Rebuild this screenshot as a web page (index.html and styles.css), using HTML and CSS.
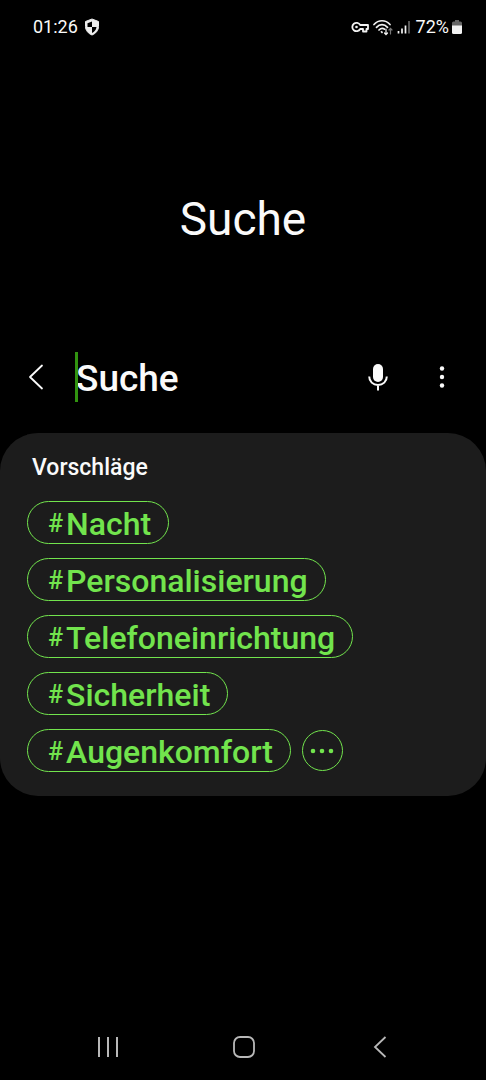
FILE: index.html
```html
<!DOCTYPE html>
<html lang="de">
<head>
<meta charset="utf-8">
<meta name="viewport" content="width=device-width, initial-scale=1">
<title>Suche</title>
<link rel="stylesheet" href="styles.css">
</head>
<body>
<div class="screen">
  <header class="status">
    <div class="status-group">
      <span>01:26</span>
      <svg class="shield" width="16" height="18" viewBox="0 0 16 18" aria-hidden="true">
        <path d="M8 1 14.500 3.500V8.500C14.500 12.500 11.500 15.700 8 17 4.500 15.700 1.500 12.500 1.500 8.500V3.500Z" fill="#eee" stroke="#eee"/>
        <path d="M8 3.500V9H3.500V5.200ZM8 9H12.500C12.200 11.800 10.500 13.800 8 15Z" fill="#000"/>
      </svg>
    </div>
    <div class="status-group">
      <svg width="18" height="12" viewBox="0 0 18 12" fill="none" stroke="#f2f2f2" stroke-width="1.800" aria-hidden="true">
        <path d="M9.200 4H17V8H15.500V10.500H12V8H9.200A4.200 4.200 0 1 1 9.200 4Z" stroke-linejoin="round"/>
        <circle cx="5.500" cy="6" r="1.300" fill="#f2f2f2" stroke="none"/>
      </svg>
      <svg class="wifi" width="20" height="17" viewBox="0 0 20 17" fill="none" stroke="#f2f2f2" stroke-width="1.700" stroke-linecap="round" aria-hidden="true">
        <path d="M1 5.500C5.500 .500 12.500 .500 17 5.500M3.500 8.300C6.800 4.800 11.200 4.800 14.500 8.300M6 11C8 9 10 9 11.500 10.200"/>
        <path d="M7.300 12.800 9 11.700 10 13.500 9 14.500Z" fill="#f2f2f2" stroke="none"/>
        <path d="M13 10V15.500M11.500 14 13 15.700 14.500 14" stroke-width="1.200"/>
        <path d="M17.500 15V9.500M16 11 17.500 9.300 19 11" stroke="#777" stroke-width="1.200"/>
      </svg>
      <svg class="signal" width="14" height="14" viewBox="0 0 14 14" stroke-width="1.700" stroke="#f2f2f2" aria-hidden="true">
        <path d="M1.500 11V13.500M5 8.500V13.500M8.500 5.500V13.500"/><path d="M12 1V13.500" stroke="#666"/>
      </svg>
      <span>72%</span>
      <svg class="battery" width="10" height="14" viewBox="0 0 10 14" aria-hidden="true">
        <path d="M3 0H7V1.500H8.500Q10 1.500 10 3V6H0V3Q0 1.500 1.500 1.500H3Z" fill="#666"/>
        <path d="M0 5.500H10V12.500Q10 14 8.500 14H1.500Q0 14 0 12.500Z" fill="#f2f2f2"/>
      </svg>
    </div>
  </header>

  <main>
    <h1 class="title">Suche</h1>

    <form class="search" role="search">
      <button class="icon-button" type="button" aria-label="Zurück">
        <svg width="16" height="26" viewBox="0 0 16 26" fill="none" stroke="#fafafa" stroke-width="1.800" stroke-linecap="round" stroke-linejoin="round"><path d="M14 1.500 2 13 14 24.500"/></svg>
      </button>
      <label class="field">
        <input type="text" placeholder="Suche" aria-label="Suche">
      </label>
      <button class="icon-button" type="button" aria-label="Spracheingabe">
        <svg width="20" height="28" viewBox="0 0 20 28" fill="none" stroke="#fafafa" stroke-width="2"><rect x="5" y="1" width="10" height="18" rx="5" fill="#fafafa" stroke="none"/><path d="M1.200 13.500C1.200 18.500 5 22 10 22S18.800 18.500 18.800 13.500M10 22V27.500"/></svg>
      </button>
      <button class="icon-button more" type="button" aria-label="Weitere Optionen">
        <svg width="6" height="22" viewBox="0 0 6 22" fill="#fafafa"><circle cx="3" cy="2.500" r="2.200"/><circle cx="3" cy="11" r="2.200"/><circle cx="3" cy="19.500" r="2.200"/></svg>
      </button>
    </form>

    <section class="card">
      <h2 class="card-title">Vorschläge</h2>
      <div class="chips">
        <button class="chip" type="button"><span class="hash">#</span>Nacht</button>
        <button class="chip" type="button"><span class="hash">#</span>Personalisierung</button>
        <button class="chip" type="button"><span class="hash">#</span>Telefoneinrichtung</button>
        <button class="chip" type="button"><span class="hash">#</span>Sicherheit</button>
        <div class="chip-row">
          <button class="chip" type="button"><span class="hash">#</span>Augenkomfort</button>
          <button class="expand" type="button" aria-label="Mehr anzeigen">
            <svg width="24" height="6" viewBox="0 0 24 6" fill="#72e44d"><circle cx="3" cy="3" r="2.300"/><circle cx="12" cy="3" r="2.300"/><circle cx="21" cy="3" r="2.300"/></svg>
          </button>
        </div>
      </div>
    </section>
  </main>

  <nav class="navbar">
    <button class="icon-button" type="button" aria-label="Letzte Apps">
      <svg width="22" height="22" viewBox="0 0 22 22" stroke="#b8b8b8" stroke-width="2"><path d="M2 1V21M11 1V21M20 1V21"/></svg>
    </button>
    <button class="icon-button" type="button" aria-label="Startseite">
      <svg width="22" height="22" viewBox="0 0 22 22" fill="none" stroke="#b8b8b8" stroke-width="1.800"><rect x="1" y="1" width="20" height="20" rx="6"/></svg>
    </button>
    <button class="icon-button" type="button" aria-label="Zurück">
      <svg width="14" height="22" viewBox="0 0 14 22" fill="none" stroke="#b8b8b8" stroke-width="1.800"><path d="M12.500 1 2 11 12.500 21"/></svg>
    </button>
  </nav>
</div>
</body>
</html>
```
FILE: styles.css
```css
* {
  box-sizing: border-box;
}

body {
  margin: 0;
  background: #000;
  color: #fafafa;
  font-family: Roboto, sans-serif;
}

button {
  margin: 0;
  padding: 0;
  border: 0;
  background: none;
  color: inherit;
  font: inherit;
  cursor: pointer;
}

svg {
  display: block;
  flex: none;
}

.screen {
  display: flex;
  flex-direction: column;
  min-height: 100vh;
}

main {
  flex: 1;
}

.status {
  display: flex;
  justify-content: space-between;
  height: 54px;
  padding: 0 24px 0 33px;
  font-size: 18px;
  line-height: 24px;
}

.status-group {
  display: flex;
  align-items: center;
}

.shield {
  margin-left: 6px;
}

.wifi {
  margin-left: 4px;
}

.signal {
  margin: 0 5px 0 4px;
}

.battery {
  margin-left: 3px;
}

.title {
  margin: 0;
  padding: 137px 0 101px;
  font-size: 46px;
  font-weight: 400;
  line-height: 56px;
  text-align: center;
}

.search {
  display: flex;
  align-items: center;
  height: 58px;
  padding: 0 22px 0 14px;
}

.icon-button {
  display: flex;
  align-items: center;
  justify-content: center;
  width: 44px;
  height: 44px;
  flex: none;
}

.more {
  margin-left: 20px;
}

.field {
  position: relative;
  display: flex;
  flex: 1;
  min-width: 0;
  margin-left: 17px;
}

.field::before {
  content: "";
  position: absolute;
  top: 0;
  bottom: 0;
  left: 0;
  width: 3px;
  background: #319310;
}

.field input {
  width: 100%;
  height: 50px;
  padding: 2px 0 0 1px;
  border: 0;
  outline: 0;
  background: none;
  color: #fafafa;
  font: 500 37px Roboto, sans-serif;
}

.field input::placeholder {
  color: #fafafa;
  opacity: 1;
}

.card {
  margin-top: 27px;
  padding: 21px 27px 24px;
  border-radius: 38px;
  background: #1c1c1c;
}

.card-title {
  margin: 0 0 19px 5px;
  font-size: 23px;
  font-weight: 500;
  line-height: 28px;
}

.chips {
  display: flex;
  flex-direction: column;
  align-items: flex-start;
  gap: 14px;
}

.chip-row {
  display: flex;
  align-items: center;
  gap: 11px;
}

.chip {
  display: flex;
  align-items: center;
  height: 43px;
  padding: 2px 17px 0 20px;
  border: 1px solid #72e44d;
  border-radius: 22px;
  color: #72e44d;
  font-size: 32px;
  font-weight: 500;
  line-height: 38px;
}

.hash {
  margin-right: 3px;
  font-size: 25px;
  font-weight: 500;
}

.expand {
  display: flex;
  align-items: center;
  justify-content: center;
  width: 41px;
  height: 41px;
  border: 1px solid #72e44d;
  border-radius: 50%;
}

.navbar {
  display: flex;
  justify-content: space-around;
  align-items: center;
  height: 66px;
  padding: 0 38px 0 40px;
}
```
